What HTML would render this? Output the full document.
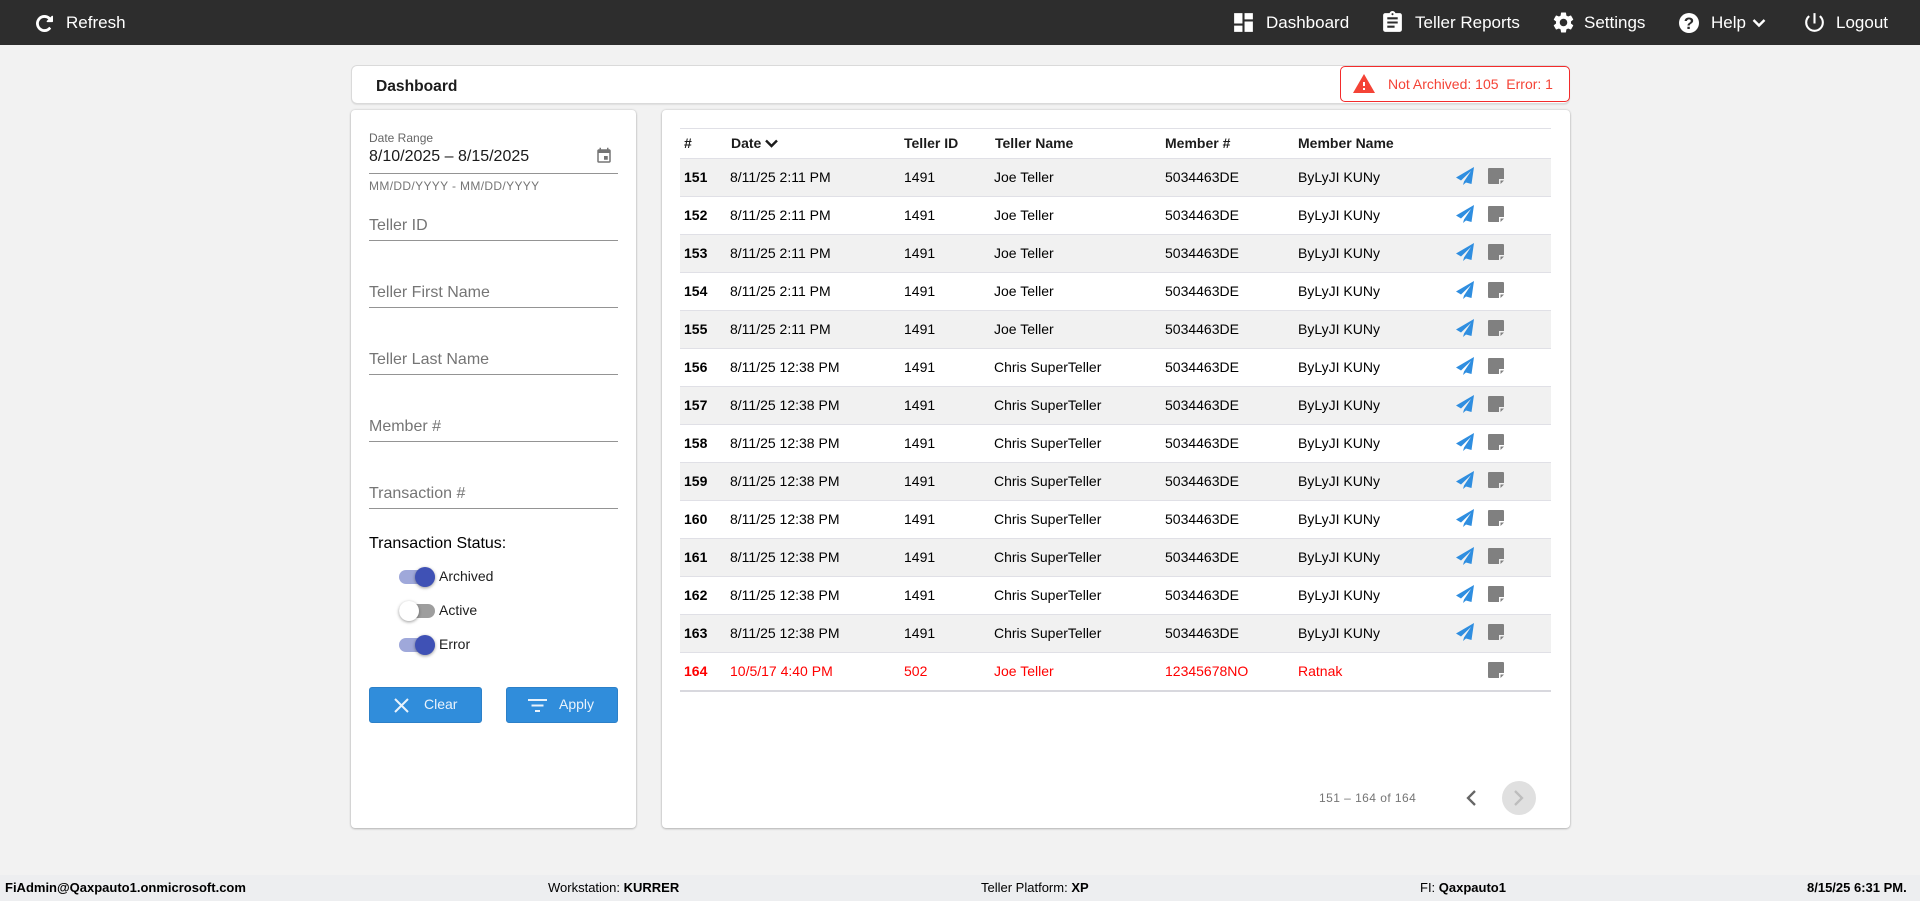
<!DOCTYPE html>
<html><head><meta charset="utf-8"><title>Dashboard</title>
<style>
*{box-sizing:border-box}
html,body{margin:0;padding:0;width:1920px;height:901px;overflow:hidden;background:#f2f2f2;font-family:"Liberation Sans",sans-serif;color:#000}
.a{position:absolute;white-space:nowrap}
svg{position:absolute;display:block}
.top{position:absolute;left:0;top:0;width:1920px;height:45px;background:#2d2d2d}
.n{position:absolute;top:0;line-height:45px;font-size:17px;color:#fff;white-space:nowrap}
.card{position:absolute;background:#fff;border-radius:4px;box-shadow:0 0 2px rgba(0,0,0,.18),0 1px 2px rgba(0,0,0,.2)}
.lab{position:absolute;left:369px;font-size:16px;color:#757575;line-height:20px;white-space:nowrap}
.ul{position:absolute;left:369px;width:249px;height:1px;background:#949494}
.row{position:absolute;left:680px;width:871px;height:38px;border-bottom:1px solid #e0e0e6;font-size:14px;line-height:36px}
.row.o{background:#f1f1f1}
.row span{position:absolute;top:0;white-space:nowrap}
.c0{left:4px;font-weight:bold}.c1{left:50px}.c2{left:224px}.c3{left:314px}.c4{left:485px}.c5{left:618px}
.red{color:#f00}
.h{position:absolute;top:128px;height:30px;line-height:31px;font-size:14px;font-weight:bold;color:#1c1c1c;white-space:nowrap}
.track{position:absolute;left:399px;width:36px;height:14px;border-radius:7px}
.thumb{position:absolute;width:20px;height:20px;border-radius:50%;box-shadow:0 1px 3px rgba(0,0,0,.4)}
.tl{position:absolute;left:439px;font-size:14px;line-height:20px;color:#1d1d1d}
.btn{position:absolute;top:687px;height:36px;background:#308ddb;border-radius:3px;border:1px solid #2c80c8}
.bt{position:absolute;top:687px;line-height:35px;font-size:14px;color:#e9f3fc}
.foot{position:absolute;left:0;top:875px;width:1920px;height:26px;background:#edeef0;font-size:13px;line-height:25px;color:#000}
.foot span{position:absolute;top:0;white-space:nowrap}
</style></head>
<body>
<svg width="0" height="0" style="position:absolute"><defs>
<symbol id="send" viewBox="0 0 18 18"><path fill="#2f8ee0" d="M18 0L0 10.500L5 13.500L15 4L8 14.500L7 18L10 15.500L15.500 17Z"/></symbol>
<symbol id="note" viewBox="0 0 16 16"><path fill="#808080" d="M0 1a1 1 0 0 1 1-1H15a1 1 0 0 1 1 1V11H11V16H1a1 1 0 0 1-1-1Z"/><path fill="#808080" d="M12.500 12.500H16L12.500 16Z"/></symbol>
</defs></svg>

<div class="top"></div>
<svg style="left:36px;top:15px" width="17" height="17" viewBox="128 128 1536 1536"><path fill="#fff" d="M1664 256v448q0 26-19 45t-45 19h-448q-42 0-59-40-17-39 14-69l138-138q-148-137-349-137-104 0-198.500 40.500t-163.500 109.500-109.500 163.500-40.500 198.500 40.500 198.500 109.500 163.500 163.500 109.500 198.500 40.500q119 0 225-52t179-147q7-10 23-12 15 0 25 9l137 138q9 8 9.500 20.500t-7.500 22.500q-109 132-264 204.500t-327 72.500q-156 0-298-61t-245-164-164-245-61-298 61-298 164-245 245-164 298-61q147 0 284.500 55.500t244.500 156.500l130-129q29-31 70-14 39 17 39 59z"/></svg>
<div class="n" style="left:66px">Refresh</div>
<svg style="left:1231px;top:10px" width="25" height="25" viewBox="0 0 24 24"><path fill="#fff" d="M3 13h8V3H3v10zm0 8h8v-6H3v6zm10 0h8V11h-8v10zm0-18v6h8V3h-8z"/></svg>
<div class="n" style="left:1266px">Dashboard</div>
<svg style="left:1380px;top:10px" width="25" height="25" viewBox="0 0 24 24"><path fill="#fff" d="M19 3h-4.180C14.400 1.840 13.300 1 12 1c-1.300 0-2.400.84-2.820 2H5c-1.100 0-2 .9-2 2v14c0 1.100.9 2 2 2h14c1.100 0 2-.9 2-2V5c0-1.100-.9-2-2-2zm-7 0c.55 0 1 .45 1 1s-.45 1-1 1-1-.45-1-1 .45-1 1-1zm2 14H7v-2h7v2zm3-4H7v-2h10v2zm0-4H7V7h10v2z"/></svg>
<div class="n" style="left:1415px">Teller Reports</div>
<svg style="left:1551px;top:10px" width="25" height="25" viewBox="0 0 24 24"><path fill="#fff" d="M19.140 12.940c.04-.3.06-.61.06-.94 0-.32-.02-.64-.07-.94l2.030-1.580a.49.49 0 0 0 .12-.61l-1.920-3.320a.488.488 0 0 0-.59-.22l-2.390.96c-.5-.38-1.030-.7-1.620-.94l-.36-2.540a.484.484 0 0 0-.48-.41h-3.840c-.24 0-.43.17-.47.41l-.36 2.540c-.59.24-1.130.57-1.620.94l-2.390-.96c-.22-.08-.47 0-.59.22L2.740 8.870c-.12.21-.08.47.12.61l2.030 1.580c-.05.3-.09.63-.09.94s.02.64.07.94l-2.030 1.580a.49.49 0 0 0-.12.61l1.920 3.320c.12.22.37.29.59.22l2.390-.96c.5.38 1.030.7 1.620.94l.36 2.540c.05.24.24.41.48.41h3.840c.24 0 .44-.17.47-.41l.36-2.540c.59-.24 1.130-.56 1.620-.94l2.390.96c.22.08.47 0 .59-.22l1.920-3.320c.12-.22.07-.47-.12-.61l-2.010-1.580zM12 15.600c-1.980 0-3.600-1.620-3.600-3.600s1.620-3.600 3.600-3.600 3.600 1.620 3.600 3.600-1.620 3.600-3.600 3.600z"/></svg>
<div class="n" style="left:1584px">Settings</div>
<svg style="left:1678px;top:12px" width="22" height="22" viewBox="0 0 22 22"><circle cx="11" cy="11" r="10" fill="#fff"/><text x="11" y="17" text-anchor="middle" font-family="Liberation Sans" font-weight="bold" font-size="17" fill="#2d2d2d">?</text></svg>
<div class="n" style="left:1711px">Help</div>
<svg style="left:1752px;top:18px" width="14" height="10" viewBox="0 0 14 10"><path fill="none" stroke="#fff" stroke-width="2.400" d="M1.500 2L7 7.500L12.500 2"/></svg>
<svg style="left:1802px;top:10px" width="25" height="25" viewBox="0 0 24 24"><path fill="#fff" d="M13 3h-2v10h2V3zm4.830 2.170l-1.420 1.420A6.920 6.920 0 0 1 19 12c0 3.870-3.130 7-7 7A6.995 6.995 0 0 1 7.580 6.580L6.170 5.170A8.932 8.932 0 0 0 3 12a9 9 0 0 0 18 0c0-2.740-1.230-5.180-3.170-6.830z"/></svg>
<div class="n" style="left:1836px">Logout</div>

<div class="a" style="left:351px;top:65px;width:1219px;height:39px;background:#fff;border:1px solid #dadada;border-radius:6px;box-shadow:0 1px 1px rgba(0,0,0,.08)"></div>
<div class="a" style="left:376px;top:68px;line-height:38px;font-size:15.600px;font-weight:bold;color:#1c1c1c">Dashboard</div>
<div class="a" style="left:1340px;top:66px;width:230px;height:36px;background:#fff;border:1.500px solid #f32b2b;border-radius:5px"></div>
<svg style="left:1352px;top:72px" width="24" height="24" viewBox="0 0 24 24"><path fill="#f44336" d="M1 21h22L12 2 1 21zm12-3h-2v-2h2v2zm0-4h-2v-4h2v4z"/></svg>
<div class="a" style="left:1388px;top:66px;line-height:36px;font-size:14px;color:#f44336;white-space:pre">Not Archived: 105  Error: 1</div>

<div class="card" style="left:351px;top:110px;width:285px;height:718px"></div>
<div class="card" style="left:662px;top:110px;width:908px;height:718px"></div>

<div class="lab" style="top:129px;font-size:12px;line-height:18px;color:#666">Date Range</div>
<div class="lab" style="top:147px;color:#1a1a1a">8/10/2025 – 8/15/2025</div>
<svg style="left:595px;top:147px" width="18" height="18" viewBox="0 0 24 24"><path fill="#757575" d="M17 12h-5v5h5v-5zM16 1v2H8V1H6v2H5c-1.110 0-1.990.9-1.990 2L3 19a2 2 0 0 0 2 2h14c1.100 0 2-.9 2-2V5c0-1.100-.9-2-2-2h-1V1h-2zm3 18H5V8h14v11z"/></svg>
<div class="ul" style="top:173px"></div>
<div class="lab" style="top:177px;font-size:12px;line-height:18px;letter-spacing:.35px">MM/DD/YYYY - MM/DD/YYYY</div>
<div class="lab" style="top:216px">Teller ID</div><div class="ul" style="top:240px"></div>
<div class="lab" style="top:283px">Teller First Name</div><div class="ul" style="top:307px"></div>
<div class="lab" style="top:350px">Teller Last Name</div><div class="ul" style="top:374px"></div>
<div class="lab" style="top:417px">Member #</div><div class="ul" style="top:441px"></div>
<div class="lab" style="top:484px">Transaction #</div><div class="ul" style="top:508px"></div>
<div class="lab" style="top:534px;color:#000">Transaction Status:</div>

<div class="track" style="top:570px;background:#9fa8da"></div><div class="thumb" style="left:415px;top:567px;background:#3f51b5"></div><div class="tl" style="top:566px">Archived</div>
<div class="track" style="top:604px;background:#9e9e9e"></div><div class="thumb" style="left:399px;top:601px;background:#fff"></div><div class="tl" style="top:600px">Active</div>
<div class="track" style="top:638px;background:#9fa8da"></div><div class="thumb" style="left:415px;top:635px;background:#3f51b5"></div><div class="tl" style="top:634px">Error</div>

<div class="btn" style="left:369px;width:113px"></div>
<svg style="left:394px;top:698px" width="15" height="15" viewBox="0 0 15 15"><path stroke="#e9f3fc" stroke-width="2" d="M1 1L14 14M14 1L1 14"/></svg>
<div class="bt" style="left:424px">Clear</div>
<div class="btn" style="left:506px;width:112px"></div>
<svg style="left:528px;top:699px" width="19" height="13" viewBox="0 0 19 13"><path stroke="#e9f3fc" stroke-width="2" d="M0 1H19M3.500 6.500H15.500M7 12H12"/></svg>
<div class="bt" style="left:559px">Apply</div>

<div class="a" style="left:680px;top:128px;width:871px;height:1px;background:#e0e0e6"></div>
<div class="h" style="left:684px">#</div>
<div class="h" style="left:731px">Date</div>
<svg style="left:765px;top:139px" width="13" height="9" viewBox="0 0 13 9"><path fill="none" stroke="#1c1c1c" stroke-width="2.400" d="M1 1.500L6.500 7L12 1.500"/></svg>
<div class="h" style="left:904px">Teller ID</div>
<div class="h" style="left:995px">Teller Name</div>
<div class="h" style="left:1165px">Member #</div>
<div class="h" style="left:1298px">Member Name</div>
<div class="a" style="left:680px;top:158px;width:871px;height:1px;background:#e0e0e6"></div>

<div class="row o" style="top:159px"><span class="c0">151</span><span class="c1">8/11/25 2:11 PM</span><span class="c2">1491</span><span class="c3">Joe Teller</span><span class="c4">5034463DE</span><span class="c5">ByLyJI KUNy</span><svg style="left:776px;top:8px" width="18" height="18"><use href="#send"/></svg><svg style="left:808px;top:9px" width="16" height="16"><use href="#note"/></svg></div>
<div class="row" style="top:197px"><span class="c0">152</span><span class="c1">8/11/25 2:11 PM</span><span class="c2">1491</span><span class="c3">Joe Teller</span><span class="c4">5034463DE</span><span class="c5">ByLyJI KUNy</span><svg style="left:776px;top:8px" width="18" height="18"><use href="#send"/></svg><svg style="left:808px;top:9px" width="16" height="16"><use href="#note"/></svg></div>
<div class="row o" style="top:235px"><span class="c0">153</span><span class="c1">8/11/25 2:11 PM</span><span class="c2">1491</span><span class="c3">Joe Teller</span><span class="c4">5034463DE</span><span class="c5">ByLyJI KUNy</span><svg style="left:776px;top:8px" width="18" height="18"><use href="#send"/></svg><svg style="left:808px;top:9px" width="16" height="16"><use href="#note"/></svg></div>
<div class="row" style="top:273px"><span class="c0">154</span><span class="c1">8/11/25 2:11 PM</span><span class="c2">1491</span><span class="c3">Joe Teller</span><span class="c4">5034463DE</span><span class="c5">ByLyJI KUNy</span><svg style="left:776px;top:8px" width="18" height="18"><use href="#send"/></svg><svg style="left:808px;top:9px" width="16" height="16"><use href="#note"/></svg></div>
<div class="row o" style="top:311px"><span class="c0">155</span><span class="c1">8/11/25 2:11 PM</span><span class="c2">1491</span><span class="c3">Joe Teller</span><span class="c4">5034463DE</span><span class="c5">ByLyJI KUNy</span><svg style="left:776px;top:8px" width="18" height="18"><use href="#send"/></svg><svg style="left:808px;top:9px" width="16" height="16"><use href="#note"/></svg></div>
<div class="row" style="top:349px"><span class="c0">156</span><span class="c1">8/11/25 12:38 PM</span><span class="c2">1491</span><span class="c3">Chris SuperTeller</span><span class="c4">5034463DE</span><span class="c5">ByLyJI KUNy</span><svg style="left:776px;top:8px" width="18" height="18"><use href="#send"/></svg><svg style="left:808px;top:9px" width="16" height="16"><use href="#note"/></svg></div>
<div class="row o" style="top:387px"><span class="c0">157</span><span class="c1">8/11/25 12:38 PM</span><span class="c2">1491</span><span class="c3">Chris SuperTeller</span><span class="c4">5034463DE</span><span class="c5">ByLyJI KUNy</span><svg style="left:776px;top:8px" width="18" height="18"><use href="#send"/></svg><svg style="left:808px;top:9px" width="16" height="16"><use href="#note"/></svg></div>
<div class="row" style="top:425px"><span class="c0">158</span><span class="c1">8/11/25 12:38 PM</span><span class="c2">1491</span><span class="c3">Chris SuperTeller</span><span class="c4">5034463DE</span><span class="c5">ByLyJI KUNy</span><svg style="left:776px;top:8px" width="18" height="18"><use href="#send"/></svg><svg style="left:808px;top:9px" width="16" height="16"><use href="#note"/></svg></div>
<div class="row o" style="top:463px"><span class="c0">159</span><span class="c1">8/11/25 12:38 PM</span><span class="c2">1491</span><span class="c3">Chris SuperTeller</span><span class="c4">5034463DE</span><span class="c5">ByLyJI KUNy</span><svg style="left:776px;top:8px" width="18" height="18"><use href="#send"/></svg><svg style="left:808px;top:9px" width="16" height="16"><use href="#note"/></svg></div>
<div class="row" style="top:501px"><span class="c0">160</span><span class="c1">8/11/25 12:38 PM</span><span class="c2">1491</span><span class="c3">Chris SuperTeller</span><span class="c4">5034463DE</span><span class="c5">ByLyJI KUNy</span><svg style="left:776px;top:8px" width="18" height="18"><use href="#send"/></svg><svg style="left:808px;top:9px" width="16" height="16"><use href="#note"/></svg></div>
<div class="row o" style="top:539px"><span class="c0">161</span><span class="c1">8/11/25 12:38 PM</span><span class="c2">1491</span><span class="c3">Chris SuperTeller</span><span class="c4">5034463DE</span><span class="c5">ByLyJI KUNy</span><svg style="left:776px;top:8px" width="18" height="18"><use href="#send"/></svg><svg style="left:808px;top:9px" width="16" height="16"><use href="#note"/></svg></div>
<div class="row" style="top:577px"><span class="c0">162</span><span class="c1">8/11/25 12:38 PM</span><span class="c2">1491</span><span class="c3">Chris SuperTeller</span><span class="c4">5034463DE</span><span class="c5">ByLyJI KUNy</span><svg style="left:776px;top:8px" width="18" height="18"><use href="#send"/></svg><svg style="left:808px;top:9px" width="16" height="16"><use href="#note"/></svg></div>
<div class="row o" style="top:615px"><span class="c0">163</span><span class="c1">8/11/25 12:38 PM</span><span class="c2">1491</span><span class="c3">Chris SuperTeller</span><span class="c4">5034463DE</span><span class="c5">ByLyJI KUNy</span><svg style="left:776px;top:8px" width="18" height="18"><use href="#send"/></svg><svg style="left:808px;top:9px" width="16" height="16"><use href="#note"/></svg></div>
<div class="row red" style="top:653px;border-bottom:2px solid #d8d8de;height:39px"><span class="c0">164</span><span class="c1">10/5/17 4:40 PM</span><span class="c2">502</span><span class="c3">Joe Teller</span><span class="c4">12345678NO</span><span class="c5">Ratnak</span><svg style="left:808px;top:9px" width="16" height="16"><use href="#note"/></svg></div>

<div class="a" style="left:1319px;top:788px;line-height:20px;font-size:12px;letter-spacing:.45px;color:#757575">151 – 164 of 164</div>
<svg style="left:1464px;top:789px" width="14" height="18" viewBox="0 0 14 18"><path fill="none" stroke="#666" stroke-width="2.300" d="M11 2L4 9L11 16"/></svg>
<div class="a" style="left:1502px;top:781px;width:34px;height:34px;border-radius:50%;background:#e0e0e0"></div>
<svg style="left:1512px;top:789px" width="14" height="18" viewBox="0 0 14 18"><path fill="none" stroke="#bdbdbd" stroke-width="2.300" d="M3 2L10 9L3 16"/></svg>

<div class="foot">
<span style="left:5px;font-weight:bold">FiAdmin@Qaxpauto1.onmicrosoft.com</span>
<span style="left:548px">Workstation: <b>KURRER</b></span>
<span style="left:981px">Teller Platform: <b>XP</b></span>
<span style="left:1420px">FI: <b>Qaxpauto1</b></span>
<span style="left:1807px;font-weight:bold">8/15/25 6:31 PM.</span>
</div>
</body></html>
